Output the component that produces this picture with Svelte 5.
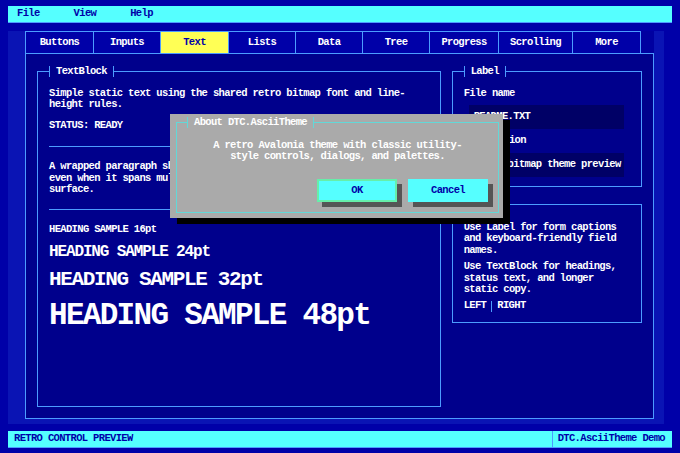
<script>
  const tabs = [
    ["Buttons", 69], ["Inputs", 67], ["Text", 68], ["Lists", 67], ["Data", 67],
    ["Tree", 67], ["Progress", 69], ["Scrolling", 74], ["More", 68]
  ];
  const sizes = [
    ["h16", "16pt"], ["h24", "24pt"], ["h32", "32pt"], ["h48", "48pt"]
  ];
</script>

<div class="screen">
  <div class="menu">
    <span>File</span>
    <span>View</span>
    <span>Help</span>
  </div>

  <div class="work">
    <div class="tabs">
      {#each tabs as [name, w]}
        <div class="tab" class:active={name === "Text"} style="width: {w}px">{name}</div>
      {/each}
    </div>

    <div class="page">
      <section class="group left">
        <div class="legend"><span>TextBlock</span></div>
        <p>Simple static text using the shared retro bitmap font and line-<br />height rules.</p>
        <p class="status">STATUS: READY</p>
        <div class="sep"></div>
        <p>A wrapped paragraph should stay readable and aligned<br />even when it spans multiple lines on a dark<br />surface.</p>
        <div class="sep second"></div>
        {#each sizes as [cls, label]}
          <div class="heading {cls}">HEADING SAMPLE {label}</div>
        {/each}
      </section>

      <div class="side">
        <section class="group form">
          <div class="legend"><span>Label</span></div>
          <p class="cap">File name</p>
          <div class="box">README.TXT</div>
          <p class="cap">Description</p>
          <div class="box">Retro bitmap theme preview</div>
        </section>

        <section class="group notes">
          <div class="legend"><span>Notes</span></div>
          <p>Use Label for form captions<br />and keyboard-friendly field<br />names.</p>
          <p>Use TextBlock for headings,<br />status text, and longer<br />static copy.</p>
          <p class="split"><span>LEFT</span><i></i><span>RIGHT</span></p>
        </section>
      </div>
    </div>
  </div>

  <div class="statusbar">
    <span class="grow">RETRO CONTROL PREVIEW</span>
    <span class="demo">DTC.AsciiTheme Demo</span>
  </div>

  <div class="dialog">
    <div class="frame">
      <div class="legend"><span>About DTC.AsciiTheme</span></div>
      <p>A retro Avalonia theme with classic utility-<br />style controls, dialogs, and palettes.</p>
      <div class="buttons">
        <button class="focus">OK</button>
        <button>Cancel</button>
      </div>
    </div>
  </div>
</div>

<style>
  :global(body) {
    margin: 0;
    background: #0000a8;
  }

  .screen {
    position: relative;
    width: 680px;
    height: 453px;
    box-sizing: border-box;
    padding: 6px 8px 0;
    overflow: hidden;
    color: #fff;
    font-family: "Liberation Mono", monospace;
    font-size: 10.5px;
    font-weight: 700;
    line-height: 11.4px;
    letter-spacing: -0.65px;
  }

  p {
    margin: 0;
  }

  .menu {
    display: flex;
    height: 17px;
    align-items: center;
    padding-left: 9px;
    gap: 34px;
    background: #55ffff;
    border-bottom: 1px solid #4c9cff;
    box-sizing: border-box;
    color: #0000a8;
  }

  .work {
    width: 656px;
    height: 393px;
    margin-top: 8px;
    box-sizing: border-box;
    padding: 0 10px 5px 17px;
    background: #0a14b4;
  }

  .tabs {
    display: flex;
    height: 22px;
    background: #0000a0;
    width: 629px;
  }

  .tab {
    box-sizing: border-box;
    display: flex;
    align-items: center;
    justify-content: center;
    border: 1px solid #4c9cff;
    border-left-width: 0;
    border-bottom: 0;
    background: #0000a8;
  }

  .tab:first-child {
    border-left-width: 1px;
  }

  .tab.active {
    background: #ffff55;
    color: #0000a8;
  }

  .page {
    display: flex;
    gap: 11px;
    height: 366px;
    box-sizing: border-box;
    padding: 17px 11px 12px 11px;
    border: 1px solid #4c9cff;
    background: #00008c;
  }

  .group {
    position: relative;
    border: 1px solid #4c9cff;
    box-sizing: border-box;
    padding: 16px 11px 0;
  }

  .legend {
    position: absolute;
    left: 11px;
    top: -6px;
    height: 11px;
    padding: 0 6px;
    background: #00008c;
    border-left: 1px solid #4c9cff;
    border-right: 1px solid #4c9cff;
    line-height: 11px;
  }

  .left {
    width: 405px;
    height: 336px;
  }

  .status {
    margin-top: 9px;
  }

  .sep {
    height: 1px;
    margin: 15px 0 14px;
    background: #4c9cff;
  }

  .sep.second {
    margin: 14px 0 0;
  }

  .heading {
    white-space: nowrap;
  }

  .h16 {
    margin-top: 14px;
  }

  .h24 {
    margin-top: 8px;
    font-size: 16px;
    line-height: 17px;
    letter-spacing: -1.13px;
  }

  .h32 {
    margin-top: 8px;
    font-size: 21px;
    line-height: 22px;
    letter-spacing: -1.35px;
  }

  .h48 {
    margin-top: 9px;
    font-size: 31px;
    line-height: 32px;
    letter-spacing: -1.7px;
  }

  .side {
    display: flex;
    flex-direction: column;
    gap: 17px;
    width: 191px;
  }

  .form {
    height: 116px;
  }

  .notes {
    height: 119px;
    padding-top: 17px;
  }

  .notes p + p {
    margin-top: 5px;
  }

  .cap {
    margin-bottom: 6px;
  }

  .box {
    box-sizing: border-box;
    width: 155px;
    height: 24px;
    margin: 0 0 6px 5px;
    padding: 6px 5px;
    background: #000066;
    white-space: nowrap;
  }

  .split {
    display: flex;
    align-items: center;
    gap: 5px;
  }

  .split i {
    width: 1px;
    height: 11px;
    background: #4c9cff;
  }

  .statusbar {
    display: flex;
    height: 17px;
    margin-top: 7px;
    align-items: center;
    background: #55ffff;
    border-bottom: 1px solid #4c9cff;
    box-sizing: border-box;
    color: #0000a8;
    width: 664px;
  }

  .grow {
    flex: 1;
    padding-left: 6px;
  }

  .demo {
    display: flex;
    align-items: center;
    height: 100%;
    padding: 0 7px 0 5px;
    border-left: 1px solid #4c9cff;
  }

  .dialog {
    position: absolute;
    left: 170px;
    top: 114px;
    width: 333px;
    height: 104px;
    box-sizing: border-box;
    padding: 8px 4px 5px 6px;
    background: #aaaaaa;
    box-shadow: 7px 6px 0 #000;
  }

  .frame {
    position: relative;
    height: 100%;
    box-sizing: border-box;
    border: 1px solid #62d8d8;
    padding-top: 17px;
    text-align: center;
  }

  .frame .legend {
    left: 10px;
    background: #aaaaaa;
    border-color: #62d8d8;
  }

  .buttons {
    display: flex;
    justify-content: flex-end;
    gap: 11px;
    margin: 16px 10px 0 0;
  }

  button {
    width: 80px;
    height: 23px;
    padding: 0;
    border: 2px solid #55ffff;
    border-radius: 0;
    background: #55ffff;
    color: #0000a8;
    font: inherit;
    letter-spacing: inherit;
    box-shadow: 5px 5px 0 #555555;
  }

  button.focus {
    border-color: #66eeaa;
  }
</style>
